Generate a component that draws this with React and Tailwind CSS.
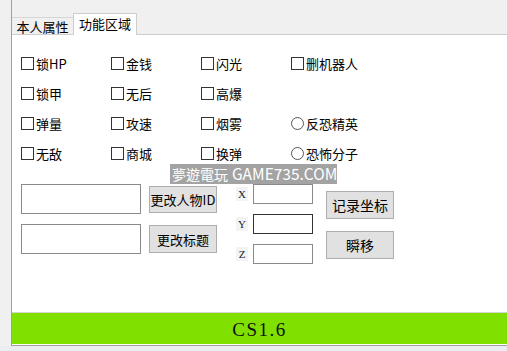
import React from 'react';

// 功能区域 tab of a small trainer window
const rows = [
  [{ t: '锁HP' }, { t: '金钱' }, { t: '闪光' }, { t: '删机器人' }],
  [{ t: '锁甲' }, { t: '无后' }, { t: '高爆' }, null],
  [{ t: '弹量' }, { t: '攻速' }, { t: '烟雾' }, { t: '反恐精英', radio: true }],
  [{ t: '无敌' }, { t: '商城' }, { t: '换弹' }, { t: '恐怖分子', radio: true }],
];

function Option({ item }) {
  if (!item) return <div />;
  return (
    <div className="flex items-center gap-[2px] h-[30px]">
      {item.radio ? (
        <span className="w-[13px] h-[13px] rounded-full border border-[#555] bg-white" />
      ) : (
        <span className="w-[13px] h-[13px] border border-[#333] bg-white" />
      )}
      <span className="leading-none">{item.t}</span>
    </div>
  );
}

function CoordRow({ label, focused }) {
  return (
    <div className="flex items-center gap-[5px]">
      <span className="w-[12px] h-[14px] bg-[#f3f3f3] flex items-center justify-center text-[11px] font-['Liberation_Serif',serif] text-[#222] leading-none">{label}</span>
      <div className={focused ? 'w-[60px] h-[20px] border border-[#333] bg-white' : 'w-[60px] h-[20px] border border-[#8a8a8a] bg-white'} />
    </div>
  );
}

export default function App() {
  return (
    <div className="w-[507px] h-[351px] bg-[#ececf3] overflow-hidden relative flex flex-col font-['Noto_Sans_CJK_SC',sans-serif] text-[13px] text-black">
      <div className="h-[346px] bg-[#f0f0f0] pl-[11px]">
        <div className="h-full flex flex-col border-l border-b border-[#a0a0a0]">
          {/* tabs */}
          <div className="h-[35px] flex items-end border-b border-[#cdcdcd]">
            <div className="w-[61px] h-[17px] border-t border-[#d6d6d6] flex items-center justify-center leading-none">本人属性</div>
            <div className="w-[64px] h-[22px] -mb-px bg-white border-t border-l border-r border-[#cdcdcd] flex items-center justify-center leading-none pb-[2px]">功能区域</div>
          </div>

          {/* panel */}
          <div className="flex-1 bg-white pl-[9px] pt-[13px]">
            <div className="grid grid-cols-[90px_90px_90px_90px]">
              {rows.map((r, i) => r.map((item, j) => <Option key={i + '-' + j} item={item} />))}
            </div>

            <div className="mt-[16px] flex items-start">
              <div className="flex flex-col gap-[10px]">
                <div className="flex items-center gap-[8px]">
                  <div className="w-[120px] h-[30px] border border-[#8a8a8a] bg-white" />
                  <button className="w-[68px] h-[27px] bg-[#e1e1e1] border border-[#adadad] text-[13px] leading-none">更改人物ID</button>
                </div>
                <div className="flex items-center gap-[8px]">
                  <div className="w-[120px] h-[30px] border border-[#8a8a8a] bg-white" />
                  <button className="w-[68px] h-[28px] bg-[#e1e1e1] border border-[#adadad] text-[13px] leading-none">更改标题</button>
                </div>
              </div>

              <div className="ml-[19px] flex flex-col gap-[10px]">
                <CoordRow label="X" />
                <CoordRow label="Y" focused />
                <CoordRow label="Z" />
              </div>

              <div className="ml-[13px] mt-[7px] flex flex-col gap-[12px]">
                <button className="w-[68px] h-[28px] bg-[#e1e1e1] border border-[#adadad] text-[14px] leading-none">记录坐标</button>
                <button className="w-[68px] h-[28px] bg-[#e1e1e1] border border-[#adadad] text-[14px] leading-none">瞬移</button>
              </div>
            </div>
          </div>

          {/* status bar */}
          <div className="h-[32px] border-t border-[#d4d4d4] bg-[#80e000] flex items-center justify-center pt-[4px] font-['Liberation_Serif',serif] text-[19px] tracking-[1.5px] text-[#111]">CS1.6</div>
          <div className="h-[1px] bg-white" />
        </div>
      </div>

      {/* watermark */}
      <div className="absolute left-[170px] top-[164px] w-[167px] h-[20px] bg-[#a3a3a3] flex items-center px-[2px] text-white text-[14px] leading-none font-['Noto_Sans_CJK_TC','Noto_Sans',sans-serif] whitespace-nowrap">
        夢遊電玩<span className="ml-[4px] text-[15.5px]">GAME735.COM</span>
      </div>
    </div>
  );
}
